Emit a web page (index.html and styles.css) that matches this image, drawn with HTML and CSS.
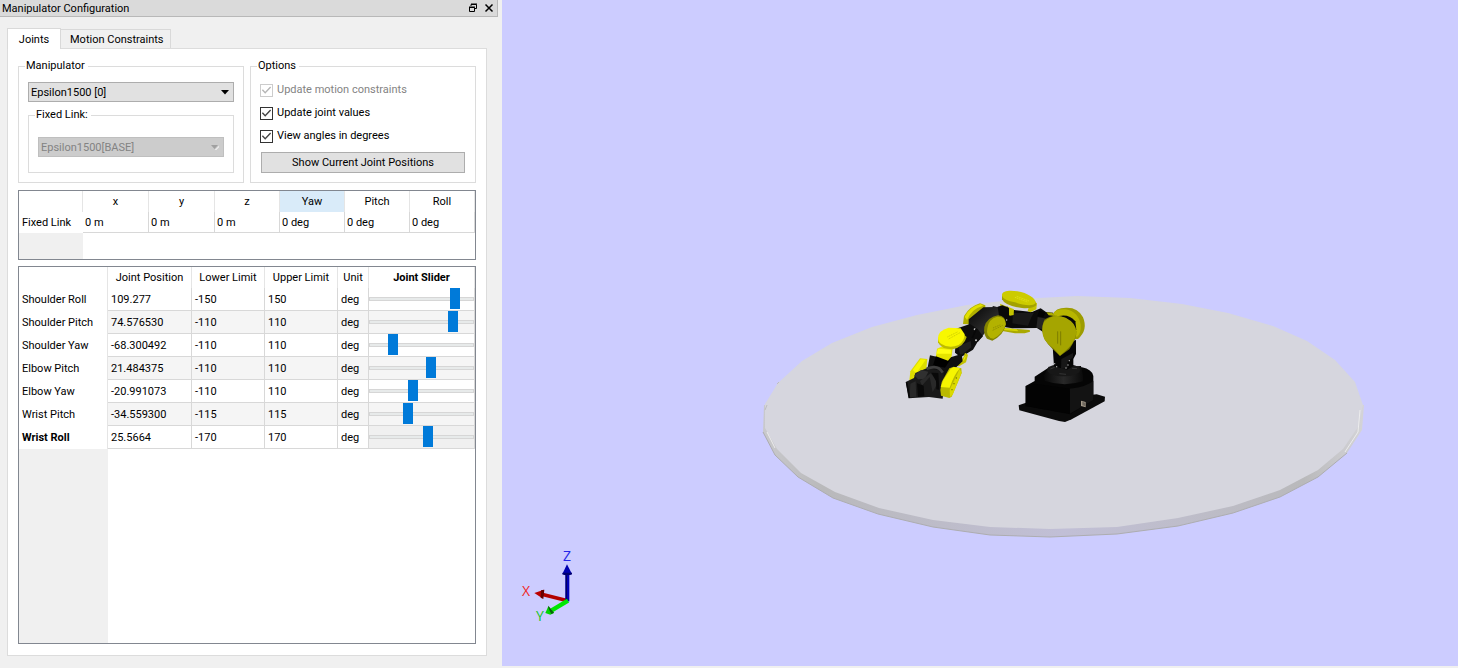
FILE: index.html
```html
<!DOCTYPE html>
<html lang="en">
<head>
<meta charset="utf-8">
<title>Manipulator Configuration</title>
<link rel="stylesheet" href="styles.css">
</head>
<body>
<main class="app">
  <section class="dock" aria-label="Manipulator Configuration">
    <header class="titlebar">
      <h1 class="title">Manipulator Configuration</h1>
      <button class="tool" type="button" aria-label="Float"><svg width="10" height="10" viewBox="0 0 10 10"><path d="M3 3V1.5H8.500V5.500H7M3 1H9M1 4.500H6.500V8.500H1.500V4.500M1 4H7" fill="none" stroke="#000"/></svg></button>
      <button class="tool" type="button" aria-label="Close"><svg width="10" height="10" viewBox="0 0 10 10"><path d="M1.500 1.500L8.500 8.500M8.500 1.500L1.500 8.500" fill="none" stroke="#000" stroke-width="1.500"/></svg></button>
    </header>
    <div class="tabs" role="tablist">
      <button class="tab active" type="button" role="tab" aria-selected="true">Joints</button>
      <button class="tab" type="button" role="tab" aria-selected="false">Motion Constraints</button>
    </div>
    <div class="panel">
      <div class="groups">
        <fieldset class="group manipulator">
          <legend>Manipulator</legend>
          <div class="combo">
            <select aria-label="Manipulator"><option>Epsilon1500 [0]</option></select>
            <svg class="arrow" width="8" height="5" viewBox="0 0 8 5"><path d="M0 0H8L4 4.500Z"/></svg>
          </div>
          <fieldset class="group fixed">
            <legend>Fixed Link:</legend>
            <div class="combo off">
              <select aria-label="Fixed Link" disabled><option>Epsilon1500[BASE]</option></select>
              <svg class="arrow" width="8" height="5" viewBox="0 0 8 5"><path d="M8 1L4 5L5 5L8 2Z" fill="#fff"/><path d="M0 0H7L3.500 4Z" fill="#a0a0a0"/></svg>
            </div>
          </fieldset>
        </fieldset>
        <fieldset class="group options">
          <legend>Options</legend>
          <label class="check off"><input type="checkbox" checked disabled>Update motion constraints</label>
          <label class="check"><input type="checkbox" checked>Update joint values</label>
          <label class="check"><input type="checkbox" checked>View angles in degrees</label>
          <button class="push" type="button">Show Current Joint Positions</button>
        </fieldset>
      </div>

      <div class="sheet link-sheet">
        <table class="grid">
          <colgroup><col class="w64"><col class="w66"><col class="w66"><col class="w65"><col class="w65"><col class="w65"><col></colgroup>
          <thead><tr><th></th><th>x</th><th>y</th><th>z</th><th class="hot">Yaw</th><th>Pitch</th><th>Roll</th></tr></thead>
          <tbody><tr><th>Fixed Link</th><td>0 m</td><td>0 m</td><td>0 m</td><td>0 deg</td><td>0 deg</td><td>0 deg</td></tr></tbody>
        </table>
        <div class="rest"></div>
      </div>

      <div class="sheet joint-sheet">
        <table class="grid">
          <colgroup><col class="w89"><col class="w84"><col class="w73"><col class="w73"><col class="w31"><col></colgroup>
          <thead><tr><th></th><th>Joint Position</th><th>Lower Limit</th><th>Upper Limit</th><th>Unit</th><th class="strong">Joint Slider</th></tr></thead>
          <tbody>
            <tr><th>Shoulder Roll</th><td>109.277</td><td>-150</td><td>150</td><td>deg</td><td class="slide"><input type="range" aria-label="Shoulder Roll" min="-150" max="150" step="any" value="109.277"></td></tr>
            <tr><th>Shoulder Pitch</th><td>74.576530</td><td>-110</td><td>110</td><td>deg</td><td class="slide"><input type="range" aria-label="Shoulder Pitch" min="-110" max="110" step="any" value="74.576530"></td></tr>
            <tr><th>Shoulder Yaw</th><td>-68.300492</td><td>-110</td><td>110</td><td>deg</td><td class="slide"><input type="range" aria-label="Shoulder Yaw" min="-110" max="110" step="any" value="-68.300492"></td></tr>
            <tr><th>Elbow Pitch</th><td>21.484375</td><td>-110</td><td>110</td><td>deg</td><td class="slide"><input type="range" aria-label="Elbow Pitch" min="-110" max="110" step="any" value="21.484375"></td></tr>
            <tr><th>Elbow Yaw</th><td>-20.991073</td><td>-110</td><td>110</td><td>deg</td><td class="slide"><input type="range" aria-label="Elbow Yaw" min="-110" max="110" step="any" value="-20.991073"></td></tr>
            <tr><th>Wrist Pitch</th><td>-34.559300</td><td>-115</td><td>115</td><td>deg</td><td class="slide"><input type="range" aria-label="Wrist Pitch" min="-115" max="115" step="any" value="-34.559300"></td></tr>
            <tr><th class="strong">Wrist Roll</th><td>25.5664</td><td>-170</td><td>170</td><td>deg</td><td class="slide current"><input type="range" aria-label="Wrist Roll" min="-170" max="170" step="any" value="25.5664"></td></tr>
          </tbody>
        </table>
        <div class="rest"></div>
      </div>
    </div>
  </section>

  <section class="view" aria-label="3D view">
    <svg class="scene" viewBox="502 0 956 666" preserveAspectRatio="xMinYMax meet">
      <defs>
        <linearGradient id="rim" x1="763" x2="1364" y1="0" y2="0" gradientUnits="userSpaceOnUse">
          <stop offset="0" stop-color="#c9c9cc"/><stop offset=".1" stop-color="#b9b9bb"/><stop offset=".3" stop-color="#bdbcc9"/><stop offset=".5" stop-color="#c1bfd6"/><stop offset=".7" stop-color="#bebdca"/><stop offset=".9" stop-color="#b9b9bb"/><stop offset="1" stop-color="#d4d4d8"/>
        </linearGradient>
        <linearGradient id="tube" x1="0" x2="1" y1="0" y2="1"><stop offset="0" stop-color="#050505"/><stop offset=".5" stop-color="#2a2a2a"/><stop offset="1" stop-color="#080808"/></linearGradient>
        <linearGradient id="cap" x1="0" x2="1"><stop offset="0" stop-color="#080808"/><stop offset=".5" stop-color="#292929"/><stop offset="1" stop-color="#0a0a0a"/></linearGradient>
      </defs>
      <!-- ground disc -->
      <path fill="url(#rim)" d="M764 405L763 432L775 455L798 477L833 498L878 514L933 527L990 535L1050 537L1117 534L1178 526L1233 513L1280 497L1318 477L1347 453L1362 430L1364 405Z"/>
      <path fill="none" stroke="#adadb0" d="M763 432L775 455L798 477L833 498L878 514L933 527L990 535L1050 537L1117 534L1178 526L1233 513L1280 497L1318 477L1347 453"/>
      <path fill="#d6d6de" d="M765 404L765 428L777 449L801 473L835 492L879 508L933 520L990 527L1050 529L1117 527L1178 518L1233 506L1280 490L1318 470L1343 449L1358 427L1363 405L1355 382L1335 360L1307 341L1273 326L1228 313L1182 304L1130 298L1077 296L1020 299L967 305L917 315L872 327L832 343L802 361L778 383Z"/>
      <path fill="none" stroke="#bdbdbf" d="M777 384L779 382M765 410L767 405"/>
      <path fill="none" stroke="#ececed" d="M767 432L775 448M1360 410L1358 432L1345 452"/>

      <!-- upper arm and base -->
      <g transform="translate(1000 280) scale(.333333)">
        <path fill="#0b0b0b" d="M56 376L78 368L290 343L315 350L314 364L215 418L195 426L177 423L58 391Z"/>
        <path fill="#050505" d="M77 318L104 303V290L143 265L246 262Q276 268 280 288V360L210 403L77 378Z"/>
        <path fill="#131313" d="M209 326Q264 319 280 302V360L210 401Z"/>
        <path fill="#030303" d="M77 318L110 312L209 326V401L77 378Z"/>
        <path fill="#a59b8a" d="M243 362L257 366V382L243 378Z"/><path fill="#6d665d" d="M247 365L255 368V378L247 376Z"/>
        <path d="M132 286L146 260L243 258L249 288V304Q191 322 134 302Z" fill="url(#cap)"/>
        <ellipse cx="191" cy="270" rx="49" ry="19" fill="#171717"/>
        <path d="M151 267L164 262M216 265L231 266M178 281L198 283" stroke="#343434" stroke-width="3"/>
        <path fill="#050505" d="M158 200L228 180V222L220 237V259L201 269L162 259Z"/>
        <path fill="#171717" d="M184 237L219 219V232L203 245V264L183 267Z"/>
        <g fill="#bbb"><circle cx="164" cy="251" r="2"/><circle cx="170" cy="260" r="2"/><circle cx="204" cy="255" r="2"/><circle cx="208" cy="242" r="2"/><circle cx="198" cy="264" r="2"/></g>
        <!-- forearm -->
        <path fill="#aaa900" d="M5 144L62 148L89 150L90 155L74 160L45 160L7 153Z"/>
        <path fill="#d5d500" d="M8 144L54 148L53 154L12 150Z"/>
        <path fill="#0a0a0a" d="M-22 78L4 84L48 91L96 96L122 85L138 96L160 98V110L128 155L111 144L37 145L8 140L-20 110Z"/>
        <path fill="#191919" d="M39 99L102 98L94 112L84 137L37 130Z"/>
        <path fill="#252525" d="M113 111L140 116L134 150L109 143Z"/>
        <path fill="#030303" d="M118 91L136 99L130 112L112 108Z"/>
        <path fill="#c4c300" d="M0 71L42 88L41 105L30 107L3 90ZM88 76L111 68L109 88L91 97L83 93Z"/>
        <path fill="#aead00" d="M139 97L157 98L163 108L146 106Z"/>
        <!-- elbow cover -->
        <path fill="#a2a100" d="M6 46V58Q15 78 66 84Q97 87 109 76L107 65Z"/>
        <path fill="#cccb00" d="M6 46C5 32 30 30 52 34C84 39 109 57 107 69C98 81 66 74 45 67C25 64 7 57 6 46Z"/>
        <path d="M45 52L82 66M50 49L87 63" stroke="#e0df18" stroke-width="3" stroke-dasharray="4 2"/>
        <!-- shoulder covers -->
        <path fill="#9d9c00" d="M159 105Q165 82 201 83Q235 83 249 112Q265 150 234 177L181 180Z"/>
        <path fill="#b7b600" d="M160 101Q168 86 197 88Q235 95 242 134Q244 160 231 171L198 153Z"/>
        <path fill="#080808" d="M177 108Q207 101 226 124L229 150L197 151Z"/>
        <path fill="#747400" d="M133 119Q164 97 198 115Q222 132 229 154Q231 174 208 208L180 228L157 206Q129 180 127 152Q126 133 133 119Z"/>
        <path fill="#a5a500" d="M132 125Q158 99 197 113Q231 130 229 159Q226 182 205 205L180 227L162 207Q143 194 133 178Q121 149 132 125Z"/>
        <path d="M173 154V191M182 154V196" stroke="#7c7c00" stroke-width="3"/>
      </g>

      <!-- wrist and gripper -->
      <g transform="translate(890 280) scale(.333333)">
        <path fill="#b0af00" d="M219 132L222 108Q239 79 270 70L286 76L286 88L239 133Z"/>
        <path fill="#e2e100" d="M224 110Q240 79 272 72L280 77Q245 86 231 120Z"/>
        <path fill="url(#tube)" d="M236 118L280 82L354 80L349 105L323 154L285 158L264 185L247 183L236 142Z"/>
        <path fill="#090909" d="M323 80L337 76L357 84V123L332 139Z"/>
        <path fill="#0d0d0d" d="M198 146L240 132L263 147L279 169L262 187L249 209L212 232L195 218Z"/>
        <path fill="#202020" d="M205 199L242 183L244 202L211 228Z"/>
        <path fill="#838300" d="M283 141Q291 112 324 106Q347 107 348 133Q341 166 307 182L291 176Q280 164 283 141Z"/>
        <path fill="#b3b200" d="M292 145Q295 117 322 110Q346 109 347 132Q342 160 310 176Q286 173 292 145Z"/>
        <path d="M308 151L338 136M309 144L332 134" stroke="#929100" stroke-width="3" stroke-dasharray="4 2"/>
        <path fill="#c3c200" d="M225 218L234 224L228 247L207 259L187 254L193 247Q220 246 225 218Z"/>
        <path d="M197 251Q219 251 226 229" fill="none" stroke="#f6f500" stroke-width="3"/>
        <path fill="#dddc00" d="M58 302L61 274L90 235L112 237L109 266L76 301Z"/>
        <path fill="#f8f700" d="M68 270L92 238L107 239L79 280Z"/>
        <path fill="#101010" d="M120 226L166 236L215 222L218 244L193 267L162 348L122 350L111 273Z"/>
        <path fill="#000" d="M139 225L181 239L165 263L129 256Z"/>
        <path fill="#e5e400" d="M141 206L157 199L188 205L185 229L174 242L138 229Z"/>
        <path fill="#ffff13" d="M144 206L183 209L184 221L139 221Z"/>
        <path fill="#bcbb00" d="M144 174V187Q153 208 188 208Q222 200 230 171L200 145Z"/>
        <path fill="#f8f700" d="M144 174Q145 151 176 143L212 145L224 163Q224 183 206 195Q177 207 153 191Q144 185 144 174Z"/>
        <path d="M176 177L210 158M172 171L204 155" stroke="#d2d100" stroke-width="3" stroke-dasharray="4 2"/>
        <path fill="#191919" d="M47 306L72 294L76 279L110 265L160 272L164 305L158 356L117 351L57 355Z"/>
        <path fill="#303030" d="M73 286L93 270L115 275L104 297L84 298Z"/>
        <path fill="#292929" d="M61 311L77 304L79 350L59 352ZM90 303L122 280L145 305L128 337L119 291L96 317Z"/>
        <path fill="#090909" d="M81 310L101 317L103 349L84 351ZM124 278L138 303L139 328L148 329L145 279Z"/>
        <path d="M110 266Q145 252 158 278" fill="none" stroke="#3e3e3e" stroke-width="8"/>
        <path fill="#bab900" d="M151 330L155 306L178 265L191 260L214 265L215 279L185 350L178 354L153 347Z"/>
        <path fill="#f6f500" d="M152 321L160 300L182 266L192 261L210 265Q192 284 179 323Z"/>
        <path fill="#dbda00" d="M209 267L215 278L188 344L180 351L179 330Z"/>
        <g fill="#6b6b00"><circle cx="199" cy="294" r="2"/><circle cx="192" cy="311" r="2"/><circle cx="186" cy="329" r="2"/></g>
        <g fill="#c8c8c8"><circle cx="254" cy="148" r="3"/><circle cx="258" cy="181" r="3"/><circle cx="350" cy="120" r="2"/></g>
        <path d="M50 307L58 354M258 148L247 174" stroke="#080808" stroke-width="5"/>
      </g>

      <!-- axis triad -->
      <g transform="translate(500 540) scale(.333333)">
        <path d="M203 182L125 163" stroke="#b20000" stroke-width="11"/><path fill="#bb0000" d="M103 159L132 149L127 175Z"/><path fill="#680000" d="M123 151L133 149L130 177L122 173Z"/>
        <path d="M202 184V98" stroke="#0000b7" stroke-width="12"/><path d="M199 181V98" stroke="#000063" stroke-width="4"/><path fill="#0000b0" d="M201 73L216 102Q202 109 187 102Z"/><path fill="#000070" d="M188 98L216 98L216 103Q202 109 187 103Z"/>
        <path d="M204 182L155 211" stroke="#00e700" stroke-width="13"/><path fill="#00d500" d="M136 219L145 199L162 219L151 224Z"/><path fill="#076507" d="M145 197L162 218L154 222L145 204Z"/>
      </g>
      <text class="axis" x="522" y="596" fill="#f02626">X</text>
      <text class="axis" x="536" y="621" fill="#15c52a">Y</text>
      <text class="axis" x="563" y="561" fill="#2626e8">Z</text>
    </svg>
  </section>
</main>
</body>
</html>
```
FILE: styles.css
```css
* { box-sizing: border-box; }
body { margin: 0; background: #f0f0f0; color: #000; font: 11px/14px Roboto, "Noto Sans", sans-serif; }
button, input, select { font: inherit; color: inherit; margin: 0; border-radius: 0; }

.app { display: flex; height: 100vh; }
.dock { flex: 0 0 502px; display: flex; flex-direction: column; padding: 0 15px 12px 7px; }

.titlebar { display: flex; align-items: center; gap: 6px; height: 17px; margin: 0 -11px 11px -7px; padding: 0 3px 0 2px; background: #dadada; border: solid #b8b8b8; border-width: 0 1px 1px 0; }
.title { flex: 1; margin: 0; padding-top: 1px; font-size: 11px; font-weight: 400; line-height: 16px; }
.tool { display: flex; padding: 0; border: 0; background: none; }

.tabs { display: flex; align-items: flex-end; height: 21px; margin-bottom: -1px; z-index: 1; }
.tab { height: 19px; margin-bottom: 1px; padding: 2px 9px 0; width: 110px; white-space: nowrap; border: 1px solid #d9d9d9; border-width: 1px 1px 0 0; background: #f0f0f0; }
.tab.active { width: 54px; height: 21px; margin-bottom: 0; border-width: 1px 1px 0 1px; background: #fff; }

.panel { flex: 1; display: flex; flex-direction: column; gap: 6px; min-height: 0; padding: 10px 10px 11px; background: #fff; border: 1px solid #dcdcdc; }

.groups { display: grid; grid-template-columns: 1fr 1fr; gap: 6px; margin-bottom: 1px; }
.group { min-width: 0; margin: 0; border: 1px solid #dcdcdc; }
.group legend { padding: 0 3px 0 1px; }
.manipulator { padding: 9px 9px 9px 6px; }
.manipulator > .combo, .manipulator > .group { margin-left: 3px; }
.options { padding: 10px 10px 9px 6px; }

.combo { display: grid; align-items: center; }
.combo select { grid-area: 1 / 1; width: 100%; height: 20px; padding: 1px 2px 0; appearance: none; background: #e1e1e1; border: 1px solid #adadad; }
.combo.off select { color: #838383; background: #ccc; border-color: #bfbfbf; opacity: 1; }
.arrow { grid-area: 1 / 1; justify-self: end; margin-right: 5px; pointer-events: none; }
.fixed { margin-top: 6px; padding: 15px 9px 15px 6px; }
.fixed .combo { margin-left: 3px; }

.check { display: flex; align-items: center; gap: 4px; height: 14px; margin: 0 0 9px 3px; line-height: 16px; }
.check.off { color: #838383; }
.check input { width: 13px; height: 13px; appearance: none; border: 1px solid #333; background: #fff; }
.check input::before { content: ""; display: block; height: 11px; background: #444; clip-path: polygon(8% 52%, 17% 43%, 38% 65%, 83% 18%, 92% 27%, 38% 83%); }
.check.off input { border-color: #ccc; }
.check.off input::before { background: #b5b5b5; }
.push { display: block; width: calc(100% - 4px); height: 21px; margin-left: 4px; padding: 0; background: #e1e1e1; border: 1px solid #adadad; }

.sheet { display: flex; flex-direction: column; border: 1px solid #828790; background: #fff; }
.link-sheet { flex: 0 0 70px; }
.joint-sheet { flex: 1; min-height: 0; }
.rest { flex: 1; width: 64px; background: #f0f0f0; }
.joint-sheet .rest { width: 89px; }

.grid { width: 100%; table-layout: fixed; border-collapse: separate; border-spacing: 0; }
.grid th, .grid td { height: 21px; padding: 0 3px; text-align: left; font-weight: 400; white-space: nowrap; }
.grid thead th { padding-top: 1px; text-align: center; border-right: 1px solid #e5e5e5; }
.grid td { border: solid #d8d8d8; border-width: 0 1px 1px 0; padding: 2px 2px 0; }
.joint-sheet tbody th { border-right: 1px solid #e5e5e5; }
.joint-sheet tbody th, .joint-sheet tbody td { height: 23px; padding-top: 1px; }
.joint-sheet td { padding-left: 3px; }
.joint-sheet tr:nth-child(even) td { background: #f5f5f5; }
.grid .hot { background: #d9ebf9; }
.grid .strong { font-weight: 700; }
.joint-sheet tbody td.slide { padding: 0; }
.joint-sheet td.current { background: #f0f0f0; }
.w31 { width: 31px; }
.w64 { width: 64px; }
.w65 { width: 65px; }
.w66 { width: 66px; }
.w73 { width: 73px; }
.w84 { width: 84px; }
.w89 { width: 89px; }

.slide input { display: block; width: 100%; height: 22px; appearance: none; background: none; }
.slide input::-webkit-slider-runnable-track { height: 4px; background: #e7eaea; border: 1px solid #d6d6d6; }
.slide input::-webkit-slider-thumb { width: 10px; height: 21px; margin-top: -10px; appearance: none; background: #007ad9; border: 0; border-radius: 0; }

.view { flex: 1; min-width: 0; margin-bottom: 2px; background: #ccccff; }
.scene { display: block; width: 100%; height: 100%; }
.axis { font: 14px "Open Sans", sans-serif; }
```
